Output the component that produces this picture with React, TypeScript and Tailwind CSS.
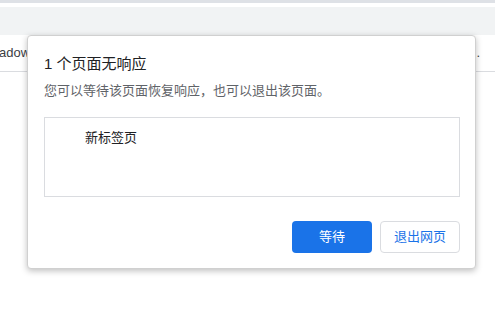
export default function App() {
  return (
    <div
      className="relative h-[312px] w-[495px] overflow-hidden bg-white"
      style={{ fontFamily: '"Liberation Sans", "Noto Sans CJK SC", sans-serif' }}
    >
      {/* 浏览器外壳 */}
      <div className="h-[3px] bg-[#dee1e6]" />
      <div className="h-[4px] bg-white" />
      <div className="h-[28px] bg-[#f1f3f4]" />
      <div className="flex h-[37px] items-center justify-between border-b border-[#dadce0] pr-[15px]">
        <span className="-ml-[1px] text-[13px] text-[#3c4043]">adow</span>
        <span className="text-[13px] text-[#3c4043]">.</span>
      </div>

      {/* 无响应对话框 */}
      <div className="absolute left-[27px] top-[35px] flex w-[449px] flex-col rounded-[4px] border border-[#d0d0d0] bg-white pb-[15px] pl-[16px] pr-[15px] pt-[17px] shadow-[0_2px_6px_rgba(0,0,0,0.25)]">
        <h2 className="text-[15px] leading-[22px] text-[#202124]">1 个页面无响应</h2>
        <p className="mt-[6px] text-[13px] leading-[20px] text-[#5f6368]">
          您可以等待该页面恢复响应，也可以退出该页面。
        </p>
        <div className="mt-[16px] h-[80px] border border-[#dadce0] pl-[40px] pt-[7px]">
          <span className="text-[13px] leading-[18px] text-[#202124]">新标签页</span>
        </div>
        <div className="mt-[24px] flex justify-end gap-[8px]">
          <button
            type="button"
            className="h-[32px] w-[80px] rounded-[4px] bg-[#1a73e8] text-[13px] text-white"
          >
            等待
          </button>
          <button
            type="button"
            className="h-[32px] w-[80px] rounded-[4px] border border-[#dadce0] bg-white text-[13px] text-[#1a73e8]"
          >
            退出网页
          </button>
        </div>
      </div>
    </div>
  );
}
